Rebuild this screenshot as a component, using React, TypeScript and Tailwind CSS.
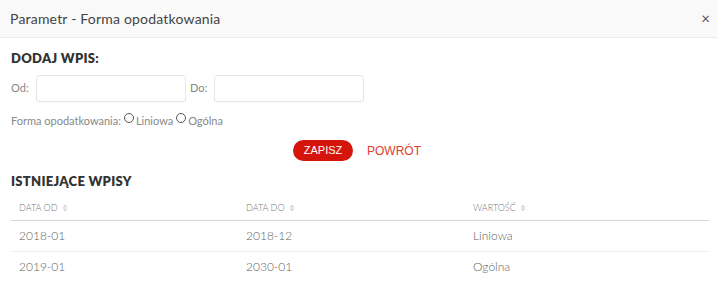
import React from 'react';

const rows = [
  { from: '2018-01', to: '2018-12', value: 'Liniowa' },
  { from: '2019-01', to: '2030-01', value: 'Ogólna' },
];

function SortIcon() {
  return (
    <svg width="6" height="8" viewBox="0 0 6 8" className="ml-1 inline-block">
      <path d="M3 0.5 L5.5 3.5 H0.5 Z" fill="#d6d6d6" />
      <path d="M3 7.5 L5.5 4.5 H0.5 Z" fill="#d6d6d6" />
    </svg>
  );
}

function Radio({ label }: { label: string }) {
  return (
    <label className="flex items-center gap-[2px]">
      <span className="w-[10px] h-[10px] rounded-full border border-[#555] bg-white -translate-y-[3px]" />
      <span>{label}</span>
    </label>
  );
}

export default function App() {
  return (
    <div className="w-[718px] h-[282px] bg-white text-[#555] font-['Lato',sans-serif] overflow-hidden">
      {/* Header */}
      <div className="h-[38px] flex items-center justify-between pl-[10px] pr-[8px] bg-[#f9f9f9] border-b border-[#ececec]">
        <span className="text-[14px] text-[#444] tracking-[0.2px]">Parametr - Forma opodatkowania</span>
        <span className="text-[15px] text-[#555] leading-none pb-[1px]">×</span>
      </div>

      <div className="px-[11px] pt-[12px]">
        <h2 className="text-[13px] font-extrabold text-[#333] tracking-[0.3px] leading-[16px]">DODAJ WPIS:</h2>

        <div className="flex items-center mt-[9px] text-[11px] text-[#888]">
          <span className="w-[25px]">Od:</span>
          <div className="w-[150px] h-[27px] border border-[#e6e6e6] rounded-[3px] shadow-[0_1px_1px_rgba(0,0,0,0.03)]" />
          <span className="w-[28px] pl-[4px]">Do:</span>
          <div className="w-[150px] h-[27px] border border-[#e6e6e6] rounded-[3px] shadow-[0_1px_1px_rgba(0,0,0,0.03)]" />
        </div>

        <div className="flex items-center gap-[3px] mt-[12px] text-[11px] text-[#888] leading-[14px]">
          <span>Forma opodatkowania:</span>
          <Radio label="Liniowa" />
          <Radio label="Ogólna" />
        </div>

        <div className="flex items-center justify-center gap-[14px] mt-[12px] pr-[4px] font-['Liberation_Sans',sans-serif]">
          <button className="h-[21px] w-[60px] rounded-full bg-[#d5140b] text-white text-[11px]">ZAPISZ</button>
          <button className="text-[12px] text-[#e0402f]">POWRÓT</button>
        </div>

        <h2 className="mt-[12px] text-[13px] font-extrabold text-[#333] tracking-[0.3px] leading-[16px]">ISTNIEJĄCE WPISY</h2>

        <div className="w-[698px] mt-[6px]">
          <div className="grid grid-cols-[235px_227px_236px] h-[26px] items-center border-b border-[#d9d9d9] text-[9px] text-[#777] uppercase font-light">
            <span className="pl-[8px] flex items-center">Data od<SortIcon /></span>
            <span className="flex items-center">Data do<SortIcon /></span>
            <span className="flex items-center">Wartość<SortIcon /></span>
          </div>
          {rows.map((r) => (
            <div
              key={r.from}
              className="grid grid-cols-[235px_227px_236px] h-[31px] items-center border-b border-[#eeeeee] text-[12px] text-[#5f5f5f] font-light"
            >
              <span className="pl-[8px]">{r.from}</span>
              <span>{r.to}</span>
              <span>{r.value}</span>
            </div>
          ))}
        </div>
      </div>
    </div>
  );
}
